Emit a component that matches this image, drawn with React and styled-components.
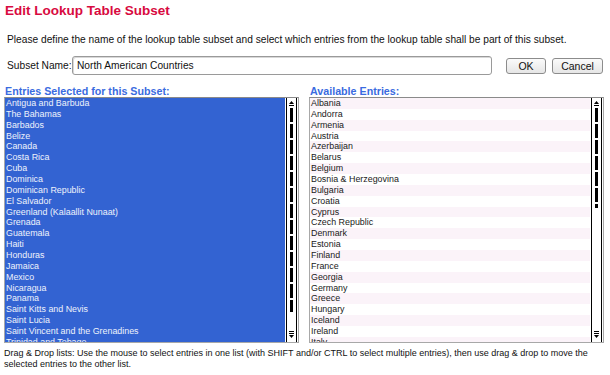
import React from "react";
import styled, { createGlobalStyle } from "styled-components";

const Global = createGlobalStyle`
  html, body { margin: 0; padding: 0; background: #fff; }
  body { font-family: "Liberation Sans", Arial, sans-serif; color: #111; }
`;

const Page = styled.div`
  width: 610px;
  height: 375px;
  padding: 1px 4px 0 4px;
  box-sizing: border-box;
  overflow: hidden;
`;

const Title = styled.h1`
  margin: 0 0 0 1px;
  font-size: 13.5px;
  line-height: 20px;
  font-weight: bold;
  color: #d80a40;
`;

const Intro = styled.p`
  margin: 13px 0 0 3px;
  font-size: 10.2px;
  line-height: 12px;
  color: #111;
  white-space: nowrap;
`;

const NameRow = styled.div`
  display: flex;
  align-items: center;
  margin-top: 10px;
  margin-left: 3px;
  height: 19px;
`;

const Label = styled.label`
  font-size: 10.2px;
  white-space: nowrap;
  flex: none;
  width: 65px;
`;

const NameInput = styled.input`
  width: 420px;
  height: 19px;
  flex: none;
  box-sizing: border-box;
  border: 1px solid #9a9a9a;
  border-radius: 3px;
  box-shadow: inset 1px 1px 0 #d8d8d8;
  font-family: "Liberation Sans", Arial, sans-serif;
  font-size: 10.2px;
  padding: 0 4px;
  color: #111;
  outline: none;
`;

const Button = styled.button`
  height: 16px;
  flex: none;
  box-sizing: border-box;
  width: ${(p) => p.$w}px;
  margin-left: ${(p) => p.$ml}px;
  border: 1px solid #8c8c8c;
  border-radius: 3px;
  background: linear-gradient(#fbfbfb, #e6e6e6);
  font-family: "Liberation Sans", Arial, sans-serif;
  font-size: 10.5px;
  padding: 0;
  color: #111;
  line-height: 14px;
`;

const Columns = styled.div`
  display: flex;
  gap: 10px;
  margin-top: 11px;
`;

const Column = styled.div`
  display: flex;
  flex-direction: column;
`;

const ColTitle = styled.div`
  font-size: 10.7px;
  font-weight: bold;
  color: #3a6be0;
  line-height: 11px;
  height: 11px;
  margin-left: 1px;
  white-space: nowrap;
`;

const ListFrame = styled.div`
  display: flex;
  height: 246px;
  width: 295px;
  box-sizing: border-box;
  border: 1px solid #a8a8a8;
  border-top-color: #8a8a8a;
`;

const ListBody = styled.div`
  flex: 1;
  overflow: hidden;
  background: ${(p) => (p.$selected ? "#3363d2" : "#fff")};
`;

const Item = styled.div`
  height: 10.86px;
  line-height: 10.86px;
  font-size: 8.9px;
  padding-left: 1px;
  white-space: nowrap;
  color: ${(p) => (p.$selected ? "#eef2fb" : "#1a1a1a")};
  background: ${(p) =>
    p.$selected ? "transparent" : p.$odd ? "#fff" : "#fbf3f9"};
`;

const ScrollTrack = styled.div`
  width: 13px;
  flex: none;
  background: #fff;
  display: flex;
`;

const Footer = styled.p`
  margin: 5px 0 0 0;
  font-size: 9px;
  line-height: 11px;
  color: #111;
`;

const ScrollBar = ({ thumbEnd }) => {
  const dashes = [];
  for (let y = 10; y < thumbEnd; y += 16) {
    dashes.push(
      <rect
        key={y}
        x="5"
        y={y}
        width="3"
        height={Math.min(14, thumbEnd - y)}
        fill="#000"
      />
    );
  }
  return (
    <ScrollTrack>
      <svg width="13" height="244" viewBox="0 0 13 244">
        <rect x="1" y="0" width="1" height="244" fill="#000" />
        <rect x="11" y="0" width="1" height="244" fill="#000" />
        <polygon points="4,6 6.5,3 9,6" fill="#000" />
        <rect x="4" y="7" width="5" height="1" fill="#000" />
        {dashes}
        <rect x="4" y="233" width="5" height="1" fill="#000" />
        <rect x="4" y="235" width="5" height="1" fill="#000" />
        <polygon points="4,237 9,237 6.5,240" fill="#000" />
      </svg>
    </ScrollTrack>
  );
};

const selected = [
  "Antigua and Barbuda",
  "The Bahamas",
  "Barbados",
  "Belize",
  "Canada",
  "Costa Rica",
  "Cuba",
  "Dominica",
  "Dominican Republic",
  "El Salvador",
  "Greenland (Kalaallit Nunaat)",
  "Grenada",
  "Guatemala",
  "Haiti",
  "Honduras",
  "Jamaica",
  "Mexico",
  "Nicaragua",
  "Panama",
  "Saint Kitts and Nevis",
  "Saint Lucia",
  "Saint Vincent and the Grenadines",
  "Trinidad and Tobago",
];

const available = [
  "Albania",
  "Andorra",
  "Armenia",
  "Austria",
  "Azerbaijan",
  "Belarus",
  "Belgium",
  "Bosnia & Herzegovina",
  "Bulgaria",
  "Croatia",
  "Cyprus",
  "Czech Republic",
  "Denmark",
  "Estonia",
  "Finland",
  "France",
  "Georgia",
  "Germany",
  "Greece",
  "Hungary",
  "Iceland",
  "Ireland",
  "Italy",
];

export default function App() {
  return (
    <Page>
      <Global />
      <Title>Edit Lookup Table Subset</Title>
      <Intro>
        Please define the name of the lookup table subset and select which
        entries from the lookup table shall be part of this subset.
      </Intro>
      <NameRow>
        <Label>Subset Name:</Label>
        <NameInput defaultValue="North American Countries" />
        <Button $w={40} $ml={14}>OK</Button>
        <Button $w={51} $ml={6}>Cancel</Button>
      </NameRow>
      <Columns>
        <Column>
          <ColTitle>Entries Selected for this Subset:</ColTitle>
          <ListFrame>
            <ListBody $selected>
              {selected.map((s) => (
                <Item key={s} $selected>
                  {s}
                </Item>
              ))}
            </ListBody>
            <ScrollBar thumbEnd={214} />
          </ListFrame>
        </Column>
        <Column>
          <ColTitle>Available Entries:</ColTitle>
          <ListFrame>
            <ListBody>
              {available.map((s, i) => (
                <Item key={s} $odd={i % 2 === 1}>
                  {s}
                </Item>
              ))}
            </ListBody>
            <ScrollBar thumbEnd={110} />
          </ListFrame>
        </Column>
      </Columns>
      <Footer>
        Drag &amp; Drop lists: Use the mouse to select entries in one list (with
        SHIFT and/or CTRL to select multiple entries), then use drag &amp; drop
        to move the
        <br />
        selected entries to the other list.
      </Footer>
    </Page>
  );
}
